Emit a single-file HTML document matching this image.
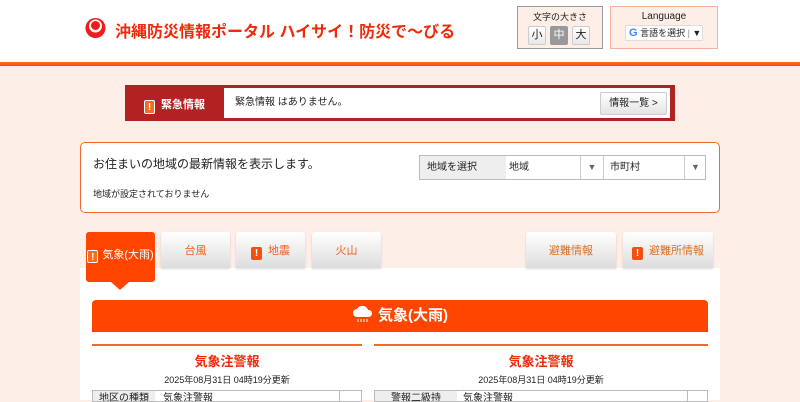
<!DOCTYPE html>
<html><head><meta charset="utf-8"><style>
*{box-sizing:border-box;margin:0;padding:0}
body{width:800px;height:400px;overflow:hidden;background:#fdeee8;font-family:"Liberation Sans","Noto Sans CJK JP",sans-serif;color:#222;position:relative}
.a{position:absolute}
.hdr{left:0;top:0;width:800px;height:62px;background:#fff}
.line{left:0;top:62px;width:800px;height:4px;background:linear-gradient(#ff6a2a,#ff4a10)}
.title{left:115px;top:18px;font-size:16px;font-weight:bold;color:#ee2a0a;white-space:nowrap}
.sz{left:517px;top:6px;width:86px;height:43px;border:1px solid #999;background:#fdeee8;font-size:9px;text-align:center}
.sz b{position:absolute;top:19px;width:18px;height:19px;border:1px solid #ccc;border-radius:2px;background:linear-gradient(#fff,#e8e8e8);font-weight:normal;font-size:11px;line-height:17px}
.lang{left:610px;top:6px;width:108px;height:43px;border:1px solid #f5b49a;background:#fdeee8;font-size:9px;text-align:center}
.btn{background:linear-gradient(#fff,#e4e4e4);border:1px solid #ccc}
.tab{top:232px;height:36px;border-radius:3px 3px 0 0;background:linear-gradient(#fff,#ddd);font-size:11px;color:#f06020;text-align:center;line-height:38px;box-shadow:0 1px 2px rgba(0,0,0,.15)}
.ex{display:inline-block;width:11px;height:13px;background:#f05010;color:#fff;font-size:10px;font-weight:bold;line-height:13px;border-radius:2px;margin-right:6px;vertical-align:-2px;text-align:center}
.tb{font-size:10px;line-height:16px;white-space:nowrap;overflow:hidden}
</style></head><body>
<div class="a hdr"></div>
<div class="a line"></div>
<svg class="a" style="left:85px;top:17px" width="21" height="22" viewBox="0 0 21 22"><circle cx="10.5" cy="11" r="10" fill="#ee1c1c"/><circle cx="10.5" cy="9" r="6.5" fill="#fff"/><circle cx="10.5" cy="8.5" r="4.5" fill="#ee1c1c"/></svg>
<div class="a title">沖縄防災情報ポータル ハイサイ！防災で〜びる</div>
<div class="a sz"><div style="margin-top:3px">文字の大きさ</div>
<b style="left:10px">小</b><b style="left:32px;background:#999;color:#fff;border-color:#999">中</b><b style="left:54px">大</b></div>
<div class="a lang"><div style="margin-top:4px;font-size:10px">Language</div>
<div class="a" style="left:14px;top:18px;width:78px;height:16px;background:#fff;border:1px solid #ddd;font-size:9px;line-height:14px;text-align:left;padding-left:3px"><span style="color:#4285f4;font-weight:bold;font-size:11px">G</span> 言語を選択 <span style="color:#888">|</span> ▼</div></div>

<div class="a" style="left:125px;top:85px;width:550px;height:36px;background:#b22222"></div>
<div class="a" style="left:144px;top:96px;color:#fff;font-size:11px;font-weight:bold"><span class="ex" style="background:#f07020;border:1px solid #fff;height:14px">!</span>緊急情報</div>
<div class="a" style="left:224px;top:88px;width:446px;height:30px;background:#fff;font-size:10px;line-height:30px;padding-left:11px">緊急情報 はありません。</div>
<div class="a btn" style="left:600px;top:92px;width:67px;height:23px;font-size:10px;line-height:21px;text-align:center;border-radius:2px">情報一覧 &gt;</div>

<div class="a" style="left:80px;top:142px;width:640px;height:71px;background:#fff;border:1px solid #f26a30;border-radius:5px"></div>
<div class="a" style="left:93px;top:155px;font-size:12px">お住まいの地域の最新情報を表示します。</div>
<div class="a" style="left:93px;top:187px;font-size:9px">地域が設定されておりません</div>
<div class="a" style="left:419px;top:155px;width:287px;height:25px;border:1px solid #bbb;background:#fff;font-size:10px;line-height:23px">
<div class="a" style="left:0;top:0;width:86px;height:23px;background:#eee;padding-left:7px">地域を選択</div>
<div class="a" style="left:89px;top:0">地域</div>
<div class="a" style="left:160px;top:0;width:24px;height:23px;border-left:1px solid #ccc;border-right:1px solid #ccc;text-align:center;color:#666;font-size:9px">▼</div>
<div class="a" style="left:190px;top:0">市町村</div>
<div class="a" style="left:264px;top:0;width:22px;height:23px;border-left:1px solid #ccc;text-align:center;color:#666;font-size:9px">▼</div>
</div>

<div class="a" style="left:80px;top:268px;width:640px;height:132px;background:#fff"></div>
<div class="a" style="left:86px;top:232px;width:69px;height:50px;background:#ff4500;border-radius:3px;color:#fff;font-size:11px;line-height:46px;text-align:center"><span class="ex" style="background:#f07020;border:1px solid #fff;margin-right:4px">!</span>気象(大雨)</div>
<div class="a" style="left:111px;top:282px;border-left:9px solid transparent;border-right:9px solid transparent;border-top:8px solid #ff4500"></div>
<div class="a tab" style="left:161px;width:69px">台風</div>
<div class="a tab" style="left:236px;width:69px"><span class="ex">!</span>地震</div>
<div class="a tab" style="left:312px;width:69px">火山</div>
<div class="a tab" style="left:526px;width:90px;color:#e07020">避難情報</div>
<div class="a tab" style="left:623px;width:90px;color:#e07020"><span class="ex">!</span>避難所情報</div>

<div class="a" style="left:92px;top:300px;width:616px;height:32px;background:#ff4500;border-radius:4px 4px 0 0;color:#fff;font-size:15px;font-weight:bold;text-align:center;line-height:32px">
<svg width="22" height="20" viewBox="0 0 22 20" style="vertical-align:-4px;margin-right:4px"><path d="M5 13a4 4 0 0 1 0-8 6 6 0 0 1 11 1 3.5 3.5 0 0 1 1 7z" fill="#fff"/><path d="M6 15v3M9 15v3M12 15v3M15 15v3" stroke="#fff" stroke-width="1"/></svg>気象(大雨)</div>
<div class="a" style="left:92px;top:344px;width:270px;height:2px;background:#f26a30"></div>
<div class="a" style="left:374px;top:344px;width:334px;height:2px;background:#f26a30"></div>
<div class="a" style="left:92px;top:351px;width:270px;text-align:center;color:#ee2a0a;font-weight:bold;font-size:13px">気象注警報</div>
<div class="a" style="left:374px;top:351px;width:334px;text-align:center;color:#ee2a0a;font-weight:bold;font-size:13px">気象注警報</div>
<div class="a" style="left:92px;top:373px;width:270px;text-align:center;font-size:9px">2025年08月31日 04時19分更新</div>
<div class="a" style="left:374px;top:373px;width:334px;text-align:center;font-size:9px">2025年08月31日 04時19分更新</div>
<div class="a tb" style="left:92px;top:390px;width:270px;height:12px;border:1px solid #bbb;background:#fff"><div class="a" style="left:0;top:0;width:62px;height:12px;background:#eee;padding-left:6px">地区の種類</div><div class="a" style="left:70px;top:0">気象注警報</div><div class="a" style="left:246px;top:0;width:1px;height:12px;background:#bbb"></div></div>
<div class="a tb" style="left:374px;top:390px;width:334px;height:12px;border:1px solid #bbb;background:#fff"><div class="a" style="left:0;top:0;width:82px;height:12px;background:#eee;padding-left:16px">警報二級持</div><div class="a" style="left:88px;top:0">気象注警報</div><div class="a" style="left:312px;top:0;width:1px;height:12px;background:#bbb"></div></div>
</body></html>
